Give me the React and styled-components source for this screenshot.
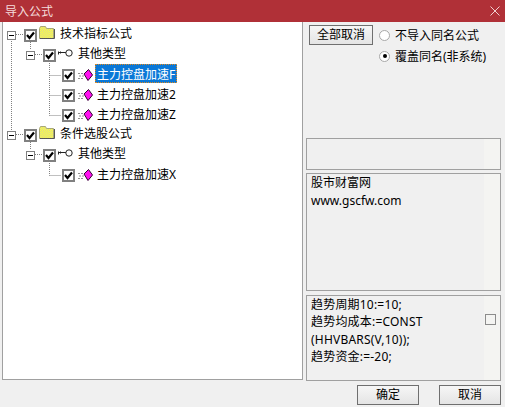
import React from 'react';
import styled, { createGlobalStyle } from 'styled-components';

const GlobalStyle = createGlobalStyle`
	html, body {
		margin: 0;
		padding: 0;
		background: #f0f0f0;
	}
	body {
		font-family: "Noto Sans", "Noto Sans CJK SC", sans-serif;
		font-size: 12px;
		color: #000;
	}
`;

const Window = styled.div`
	width: 505px;
	height: 407px;
	display: flex;
	flex-direction: column;
	overflow: hidden;
	background: #f0f0f0;
`;

const TitleBar = styled.div`
	height: 22px;
	flex: none;
	display: flex;
	align-items: center;
	justify-content: space-between;
	background: #b03037;
	color: #f4dcdc;
	padding: 0 5px 0 5px;
`;

const CloseIcon = styled.svg`
	width: 10px;
	height: 10px;
	stroke: #f0d0d0;
	stroke-width: 1;
	fill: none;
`;

const Body = styled.div`
	height: 358px;
	flex: none;
	display: flex;
	padding-left: 2px;
`;

const TreePanel = styled.div`
	position: relative;
	width: 301px;
	flex: none;
	box-sizing: border-box;
	background: #fff;
	border: 1px solid #a0a0a0;
	border-top: none;
	padding-top: 3px;
`;

const TreeLines = styled.svg`
	position: absolute;
	left: -3px;
	top: -22px;
	width: 120px;
	height: 200px;
	pointer-events: none;
`;

const Row = styled.div`
	height: 20px;
	display: flex;
	align-items: center;
	padding-left: ${(p) => p.$indent}px;
	white-space: nowrap;
`;

const Expander = styled.span`
	position: relative;
	width: 9px;
	height: 9px;
	flex: none;
	box-sizing: border-box;
	border: 1px solid #808080;
	background: #fff;
	margin-right: 8px;
	&::after {
		content: '';
		position: absolute;
		left: 1px;
		right: 1px;
		top: 3px;
		height: 1px;
		background: #000;
	}
`;

const Check = styled.span`
	width: 13px;
	height: 13px;
	flex: none;
	margin-top: 1px;
	box-sizing: border-box;
	border: 2px solid #808080;
	background: #fff;
	display: flex;
	align-items: center;
	justify-content: center;
	svg {
		width: 9px;
		height: 9px;
		fill: none;
		stroke: #000;
		stroke-width: 2.2;
	}
`;

const NodeIcon = styled.svg`
	flex: none;
	display: block;
	margin-left: ${(p) => p.$gap}px;
	margin-bottom: ${(p) => p.$lift || 0}px;
`;

const Label = styled.span`
	margin-left: ${(p) => p.$gap}px;
	margin-bottom: ${(p) => p.$lift || 0}px;
	line-height: ${(p) => (p.$selected ? '21px' : '17px')};
	height: ${(p) => (p.$selected ? '19px' : '17px')};
	padding: 0 0 0 2px;
	box-sizing: border-box;
	width: ${(p) => (p.$selected ? '82px' : 'auto')};
	overflow: hidden;
	background: ${(p) => (p.$selected ? '#0a78d7' : 'transparent')};
	color: ${(p) => (p.$selected ? '#fff' : '#000')};
	outline: ${(p) => (p.$selected ? '1px dotted #e08a20' : 'none')};
	outline-offset: -1px;
`;

const Side = styled.div`
	flex: 1;
	min-width: 0;
	display: flex;
	flex-direction: column;
	padding: 3px 4px 0 3px;
`;

const OptionBar = styled.div`
	height: 113px;
	flex: none;
	display: flex;
	align-items: flex-start;
	gap: 6px;
	padding-left: 3px;
`;

const Button = styled.button`
	box-sizing: border-box;
	width: ${(p) => p.$w}px;
	height: 20px;
	padding: 0;
	font: inherit;
	color: #000;
	line-height: 16px;
	border: 1px solid #6f6f6f;
	background: linear-gradient(#f6f6f6, #e4e4e4);
`;

const Radios = styled.div`
	display: flex;
	flex-direction: column;
	gap: 1px;
`;

const RadioRow = styled.div`
	display: flex;
	align-items: center;
	gap: 5px;
	height: 20px;
	white-space: nowrap;
`;

const Radio = styled.span`
	width: 11px;
	height: 11px;
	flex: none;
	box-sizing: border-box;
	border-radius: 50%;
	border: 1px solid #a8a8a8;
	background: #fff;
	display: flex;
	align-items: center;
	justify-content: center;
	&::after {
		content: '';
		width: 4px;
		height: 4px;
		border-radius: 50%;
		background: ${(p) => (p.$on ? '#000' : 'transparent')};
	}
`;

const Box = styled.div`
	position: relative;
	box-sizing: border-box;
	height: ${(p) => p.$h}px;
	margin-bottom: ${(p) => p.$after}px;
	flex: none;
	width: 195px;
	border: 1px solid #a0a0a0;
	padding: 0 4px;
	line-height: 18px;
	background: linear-gradient(90deg, #f0f0f0 177px, #f4f4f2 177px);
`;

const CodeText = styled.div`
	width: 170px;
	line-height: 17.4px;
	letter-spacing: 0.2px;
`;

const SmallCheck = styled.span`
	position: absolute;
	left: 178px;
	top: 18px;
	width: 11px;
	height: 11px;
	box-sizing: border-box;
	border: 1px solid #8c8c8c;
	background: #f4f4f2;
`;

const Footer = styled.div`
	height: 27px;
	flex: none;
	display: flex;
	justify-content: flex-end;
	gap: 20px;
	padding: 5px 4px 0 0;
	box-sizing: border-box;
`;

function Tick() {
	return (
		<svg viewBox="0 0 9 9">
			<path d="M1 4l2.5 3L8 1.5" />
		</svg>
	);
}

function FolderIcon({ id }) {
	return (
		<NodeIcon $gap={2} $lift={6} width="16" height="13" viewBox="0 0 16 13">
			<defs>
				<pattern id={id} width="2" height="2" patternUnits="userSpaceOnUse">
					<rect width="2" height="2" fill="#ffff40" />
					<rect width="1" height="1" fill="#d8d890" />
					<rect x="1" y="1" width="1" height="1" fill="#d8d890" />
				</pattern>
			</defs>
			<path d="M0.5 12.5V2.5l1-2h5l1 2h7v10z" fill={`url(#${id})`} stroke="#a8a878" />
			<path d="M1 12.5h14.5V3" fill="none" stroke="#555" />
		</NodeIcon>
	);
}

function KeyIcon() {
	return (
		<NodeIcon $gap={2} $lift={5} width="15" height="8" viewBox="0 0 15 8">
			<path d="M0.5 2.5v3M2.5 2.5v2M0 3.5h8" stroke="#222" fill="none" />
			<circle cx="11" cy="4" r="3.2" fill="#fff" stroke="#222" />
		</NodeIcon>
	);
}

function FormulaIcon() {
	return (
		<NodeIcon $gap={2} width="17" height="12" viewBox="0 0 17 12">
			<path d="M1 4.5h5M2 7h5M1 9.5h5" stroke="#909090" strokeDasharray="2 1" fill="none" />
			<path d="M11.5 0.5L15.5 6 11 11.5 7 5z" fill="#ff10f0" stroke="#300030" />
		</NodeIcon>
	);
}

function FolderRow({ label, id }) {
	return (
		<Row $indent={4}>
			<Expander />
			<Check>
				<Tick />
			</Check>
			<FolderIcon id={id} />
			<Label $gap={3} $lift={4}>
				{label}
			</Label>
		</Row>
	);
}

function TypeRow() {
	return (
		<Row $indent={23}>
			<Expander />
			<Check>
				<Tick />
			</Check>
			<KeyIcon />
			<Label $gap={3} $lift={4}>
				其他类型
			</Label>
		</Row>
	);
}

function FormulaRow({ label, selected }) {
	return (
		<Row $indent={59}>
			<Check>
				<Tick />
			</Check>
			<FormulaIcon />
			<Label $gap={1} $lift={selected ? 3 : 2} $selected={selected}>
				{label}
			</Label>
		</Row>
	);
}

export default function App() {
	return (
		<Window>
			<GlobalStyle />
			<TitleBar>
				<span>导入公式</span>
				<CloseIcon viewBox="0 0 10 10">
					<path d="M0.5 0.5l9 9M9.5 0.5l-9 9" />
				</CloseIcon>
			</TitleBar>
			<Body>
				<TreePanel>
					<TreeLines viewBox="0 0 120 200">
						<g stroke="#808080" strokeDasharray="1 1" fill="none">
							<path d="M11.5 39V130M16 34.5h8M16 134.5h8" />
							<path d="M30.5 42V50M35 54.5h8M30.5 142V150M35 154.5h8" />
							<path d="M49.5 63V115.5M49.5 75.5h12M49.5 95.5h12M49.5 115.5h12" />
							<path d="M49.5 163V175.5M49.5 175.5h12" />
						</g>
					</TreeLines>
					<FolderRow label="技术指标公式" id="dither-a" />
					<TypeRow />
					<FormulaRow label="主力控盘加速F" selected />
					<FormulaRow label="主力控盘加速2" />
					<FormulaRow label="主力控盘加速Z" />
					<FolderRow label="条件选股公式" id="dither-b" />
					<TypeRow />
					<FormulaRow label="主力控盘加速X" />
				</TreePanel>
				<Side>
					<OptionBar>
						<Button $w={64}>全部取消</Button>
						<Radios>
							<RadioRow>
								<Radio />
								不导入同名公式
							</RadioRow>
							<RadioRow>
								<Radio $on />
								覆盖同名(非系统)
							</RadioRow>
						</Radios>
					</OptionBar>
					<Box $h={32} $after={3} />
					<Box $h={118} $after={4}>
						<div>股市财富网</div>
						<div>www.gscfw.com</div>
					</Box>
					<Box $h={86} $after={0}>
						<CodeText>
							趋势周期10:=10;
							<br />
							趋势均成本:=CONST
							<br />
							(HHVBARS(V,10));
							<br />
							趋势资金:=-20;
						</CodeText>
						<SmallCheck />
					</Box>
				</Side>
			</Body>
			<Footer>
				<Button $w={62}>确定</Button>
				<Button $w={62}>取消</Button>
			</Footer>
		</Window>
	);
}
